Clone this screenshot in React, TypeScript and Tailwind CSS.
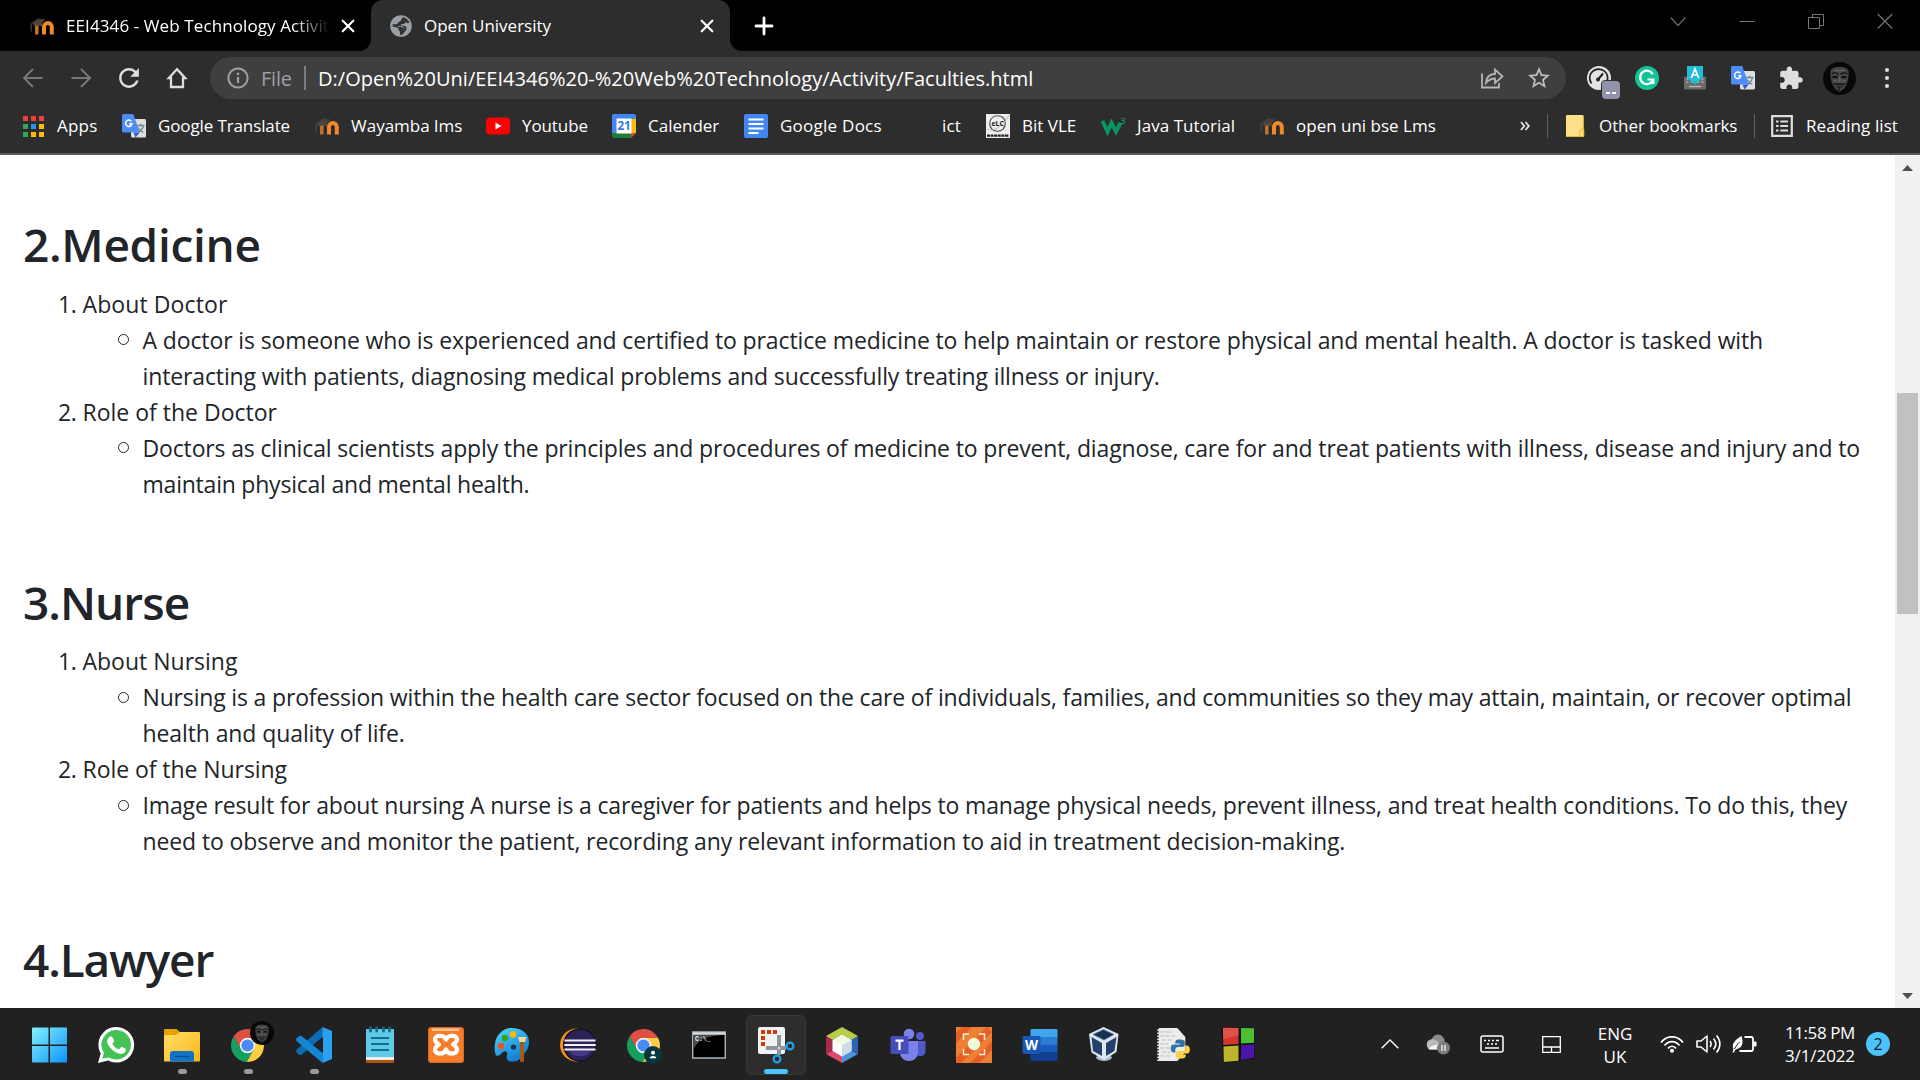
import React from "react";

type SvgProps = { box: string; className: string; children: React.ReactNode };
const Svg = ({ box, className, children }: SvgProps) => (
  <svg viewBox={box} className={`block shrink-0 overflow-visible ${className}`} fill="none">
    {children}
  </svg>
);

/* ---------- shared logos ---------- */

const Moodle = () => (
  <Svg box="0 0 24 24" className="h-6 w-6">
    <path d="M6.800 20.500V11" stroke="#c9742c" strokeWidth="3.400" />
    <path d="M14 20.500V13a3.900 3.900 0 0 1 7.800 0v7.500" stroke="#f1882a" strokeWidth="4" />
    <path d="M0.500 9.500 8 4.500l7.500 1-5 5z" fill="#46403f" />
    <path d="M3.500 9.500c2-1.500 6-1.500 8.500-.5v3.500c-2.500-1.500-6-1.500-8.500 0z" fill="#54443b" />
    <path d="M1.200 9.500v8" stroke="#5a4a42" strokeWidth="1" />
  </Svg>
);

const Translate = () => (
  <Svg box="0 0 24 24" className="h-6 w-6">
    <rect x="9" y="5" width="15" height="18.500" rx="1.500" fill="#dedede" />
    <path d="M15 11.500h7.500M18.700 9.800v1.700M21.500 11.500c-.6 3-3 5.600-5.200 7M16.200 13.500c1 2.200 3 4 5.200 5" stroke="#6b8791" strokeWidth="1.300" />
    <path d="M11.500 18.500h6.200l-4.200 5z" fill="#3a55cf" />
    <path d="M1.500 0h9.800l6.400 18.500H1.500A1.500 1.500 0 0 1 0 17V1.500A1.500 1.500 0 0 1 1.500 0z" fill="#4d8df5" />
    <path d="M9.300 7.200A3.200 3.200 0 1 0 10 9.700H7.200" stroke="#fff" strokeWidth="1.500" />
  </Svg>
);

const MaskFace = ({ className }: { className: string }) => (
  <Svg box="0 0 34 34" className={className}>
    <circle cx="17" cy="17" r="17" fill="#070707" />
    <path d="M8 8c4-4 14-4 18 0 1.500 7-1 15-4 19l-5 4-5-4c-3-4-5.500-12-4-19z" fill="#444" />
    <path d="M9 12.500c2-2 5-1.500 7 .5M25 12.500c-2-2-5-1.500-7 .5" stroke="#151515" strokeWidth="1.300" />
    <path d="M10 16c2-1.300 4-.8 5.200.2M24 16c-2-1.300-4-.8-5.200.2" stroke="#050505" strokeWidth="1.600" />
    <path d="M15.800 14v7h2.400v-7" fill="#5c5c5c" />
    <path d="M11 22c2 2 4 .8 6 .8s4 1.200 6-.8M14 25.300c2 .8 4 .8 6 0M17 27v3" stroke="#101010" strokeWidth="1.200" />
    <path d="M11 19.500h3M20 19.500h3M12 9h10" stroke="#6a6a6a" strokeWidth="1.200" />
  </Svg>
);

const Chrome = ({ className }: { className: string }) => (
  <Svg box="0 0 48 48" className={className}>
    <path d="M3.800 11.050A24 24 0 0 1 45.300 13L24 13 14.470 29.500z" fill="#dd5145" />
    <path d="M3.800 11.050A24 24 0 0 0 22.900 47.950L33.530 29.500H14.470z" fill="#16a05d" />
    <path d="M45.300 13A24 24 0 0 1 22.900 47.950L33.530 29.500 24 13z" fill="#fdcd42" />
    <circle cx="24" cy="24" r="11.300" fill="#f1f1f1" />
    <circle cx="24" cy="24" r="8.900" fill="#4c8bf5" />
  </Svg>
);

/* ---------- tab strip ---------- */

const CloseX = () => (
  <Svg box="0 0 14 14" className="h-[14px] w-[14px]">
    <path d="M1.700 1.700l10.600 10.600M12.300 1.700L1.700 12.300" stroke="#fff" strokeWidth="2.200" strokeLinecap="round" />
  </Svg>
);

const TabStrip = () => (
  <div className="flex h-[51px] w-full shrink-0 bg-black text-[17px] text-white">
    <div className="flex w-[371px] shrink-0 items-center pl-[30px]">
      <Moodle />
      <div className="ml-3 w-[264px] overflow-hidden whitespace-nowrap tracking-[0.1px] [mask-image:linear-gradient(to_right,black_86%,transparent_100%)]">
        EEI4346 - Web Technology Activit
      </div>
      <div className="ml-[11px]">
        <CloseX />
      </div>
    </div>
    <div className="relative flex w-[359px] shrink-0 items-center rounded-t-[12px] bg-[#2d2d2d] pl-[18px]">
      <Svg box="0 0 24 24" className="h-[24px] w-[24px]">
        <circle cx="12" cy="12" r="10.800" fill="#9aa0a6" />
        <path d="M14.500 3.200c2.500.8 5 2.800 6 5.300-1.500 1.300-3 .5-3.500-.7-.8 2-2.300 2.400-4 2.200-1.300 0-1.500 1.500-.3 1.500 3.500 0 4.800.8 4.800 3 0 2.500-2.500 2.800-3.500 5.800l-3 .7c0-2 .3-3.500-1-4.500-1-1 0-2.300-1.300-2.800L3.500 12.500c0-1 .2-2 .5-2.800 2.500 1 4.500.8 5-1 .5-1.500 2.500-.8 3-2.500.3-1.500 1-2.500 2.500-3z" fill="#2d2d2d" opacity=".95" />
        <path d="M9.500 12.500c3-.5 5.500.3 5.500 2" stroke="#9aa0a6" strokeWidth="1" />
      </Svg>
      <div className="ml-[11px] w-[275.500px] whitespace-nowrap">Open University</div>
      <CloseX />
      <Svg box="0 0 12 12" className="absolute -left-[12px] bottom-0 h-3 w-3">
        <path d="M12 0v12H0A12 12 0 0 0 12 0z" fill="#2d2d2d" />
      </Svg>
      <Svg box="0 0 12 12" className="absolute -right-[12px] bottom-0 h-3 w-3">
        <path d="M0 0v12h12A12 12 0 0 1 0 0z" fill="#2d2d2d" />
      </Svg>
    </div>
    <div className="flex flex-1 items-center pl-[24.500px]">
      <Svg box="0 0 18 18" className="h-[18px] w-[18px]">
        <path d="M9 1v16M1 9h16" stroke="#fff" strokeWidth="2.800" strokeLinecap="round" />
      </Svg>
    </div>
    <div className="flex gap-[53px] pt-[13px] pr-[27px]">
      <Svg box="0 0 16 16" className="h-4 w-4">
        <path d="M.7 4.500l7.300 8 7.300-8" stroke="#6b6b6b" strokeWidth="1.200" />
      </Svg>
      <Svg box="0 0 16 16" className="h-4 w-4">
        <path d="M.5 8.500h15" stroke="#777" strokeWidth="1" />
      </Svg>
      <Svg box="0 0 16 16" className="h-4 w-4">
        <path d="M.5 4.500h11v11H.5zM4.500 4V1.500h11v11H12" stroke="#777" strokeWidth="1" />
      </Svg>
      <Svg box="0 0 16 16" className="h-4 w-4">
        <path d="M.7 1l14.600 14.500M15.300 1L.7 15.500" stroke="#777" strokeWidth="1.100" />
      </Svg>
    </div>
  </div>
);

/* ---------- address bar ---------- */

const Toolbar = () => (
  <div className="flex h-[54px] w-full shrink-0 items-center pl-[21px]">
    <div className="flex w-[189px] shrink-0 gap-6">
      <Svg box="0 0 24 24" className="h-6 w-6">
        <path d="M21.500 12H3M12 3l-9 9 9 9" stroke="#777" strokeWidth="2" />
      </Svg>
      <Svg box="0 0 24 24" className="h-6 w-6">
        <path d="M2.500 12H21M12 3l9 9-9 9" stroke="#777" strokeWidth="2" />
      </Svg>
      <Svg box="2.300 2.300 19.400 19.400" className="h-6 w-6">
        <path d="M17.650 6.350C16.200 4.900 14.210 4 12 4c-4.420 0-7.990 3.580-7.990 8s3.570 8 7.990 8c3.730 0 6.840-2.550 7.730-6h-2.080c-.82 2.330-3.040 4-5.650 4-3.310 0-6-2.690-6-6s2.690-6 6-6c1.660 0 3.140.69 4.220 1.780L13 11h7V4l-2.350 2.350z" fill="#dedede" />
      </Svg>
      <Svg box="0 0 24 24" className="h-6 w-6">
        <path d="M12 3.300L3.800 12H6v9h12v-9h2.200z" stroke="#dedede" strokeWidth="2.300" />
      </Svg>
    </div>
    <div className="flex h-[42px] w-[1356px] shrink-0 items-center rounded-full bg-[#3f3f3f] pr-4 pl-[17px] text-[20px] leading-[42px]">
      <Svg box="0 0 22 22" className="h-[22px] w-[22px]">
        <circle cx="11" cy="11" r="9.600" stroke="#9b9fa3" strokeWidth="2" />
        <path d="M11 10v6" stroke="#9b9fa3" strokeWidth="2.200" />
        <circle cx="11" cy="6.900" r="1.300" fill="#9b9fa3" />
      </Svg>
      <div className="ml-3 w-[43px] pt-px tracking-[-0.2px] text-[#9b9fa3]">File</div>
      <div className="h-6 w-[2px] bg-[#7b7d80]" />
      <div className="ml-3 flex-1 pt-px tracking-[0.015px] whitespace-nowrap text-white">
        D:/Open%20Uni/EEI4346%20-%20Web%20Technology/Activity/Faculties.html
      </div>
      <Svg box="0 0 24 24" className="mr-6 h-6 w-6">
        <path d="M2 7.500v14h17V17M6 17c.5-6 4-9 9-9V3.500L22.500 10.500 15 17v-4.500c-4 0-6.500 1.500-9 4.500z" stroke="#b4b4b4" strokeWidth="1.800" />
      </Svg>
      <Svg box="2 2 20 20" className="h-[22px] w-[22px]">
        <path d="M22 9.240l-7.190-.62L12 2 9.190 8.630 2 9.240l5.460 4.730L5.820 21 12 17.270 18.180 21l-1.630-7.030L22 9.240zM12 15.400l-3.760 2.270 1-4.280-3.320-2.880 4.380-.38L12 6.100l1.710 4.040 4.380.38-3.320 2.880 1 4.280L12 15.400z" fill="#bdbdbd" />
      </Svg>
    </div>
    <div className="flex flex-1 items-center pl-[21px]">
      <div className="relative">
        <Svg box="0 0 24 24" className="h-6 w-6">
          <circle cx="12" cy="12" r="12" fill="#e3e3e3" />
          <path d="M4.500 17.500a9 9 0 1 1 15-1" stroke="#222" strokeWidth="1.700" />
          <circle cx="11" cy="13.500" r="2" fill="#222" />
          <path d="M11 13.500l5-6" stroke="#222" strokeWidth="2" />
        </Svg>
        <div className="absolute top-[15px] left-[15px] flex h-[18px] w-[18px] items-center justify-center gap-[2px] rounded-[3px] bg-[#9192ab] pt-[5px] outline outline-[#2d2d2d]">
          <div className="h-[2px] w-[4px] bg-white" />
          <div className="h-[2px] w-[4px] bg-white" />
        </div>
      </div>
      <Svg box="0 0 24 24" className="ml-6 h-6 w-6">
        <circle cx="12" cy="12" r="12" fill="#15c39a" />
        <path d="M17.800 8.300A6.700 6.700 0 1 0 18.200 13.500M12.500 13.500h5.800v4.500" stroke="#fff" strokeWidth="2.200" />
      </Svg>
      <Svg box="0 0 24 24" className="ml-6 h-6 w-6">
        <path d="M2.500 10.500h19a1.500 1.500 0 0 1 1.500 1.500v10a1.500 1.500 0 0 1-1.500 1.500h-19A1.500 1.500 0 0 1 1 22V12a1.500 1.500 0 0 1 1.500-1.500z" fill="#6a6a6a" />
        <path d="M3.500 16h2M8 16h2M14 16h2M18.500 16h2M3.500 13h2M18.500 13h2M6 20.500h12" stroke="#b5b5b5" strokeWidth="1.600" />
        <path d="M4 0h16v12l-8 6.500L4 12z" fill="#22bdd8" />
        <path d="M8.300 12L12 3l3.700 9M9.700 9h4.600" stroke="#fff" strokeWidth="1.700" />
      </Svg>
      <div className="ml-6">
        <Translate />
      </div>
      <Svg box="2 1.500 21 20.500" className="ml-[25px] h-[22px] w-[23px]">
        <path d="M20.500 11H19V7c0-1.100-.9-2-2-2h-4V3.500C13 2.120 11.880 1 10.500 1S8 2.120 8 3.500V5H4c-1.100 0-1.990.9-1.990 2v3.800H3.500c1.490 0 2.700 1.210 2.700 2.700s-1.210 2.700-2.700 2.700H2V20c0 1.100.9 2 2 2h3.800v-1.500c0-1.490 1.210-2.700 2.700-2.700 1.490 0 2.700 1.210 2.700 2.700V22H17c1.100 0 2-.9 2-2v-4h1.500c1.380 0 2.500-1.120 2.500-2.500S21.880 11 20.500 11z" fill="#dedede" />
      </Svg>
      <MaskFace className="ml-5 h-[33px] w-[33px]" />
      <div className="ml-[29px] flex flex-col gap-[4px]">
        <div className="h-1 w-1 rounded-full bg-[#dedede]" />
        <div className="h-1 w-1 rounded-full bg-[#dedede]" />
        <div className="h-1 w-1 rounded-full bg-[#dedede]" />
      </div>
    </div>
  </div>
);

/* ---------- bookmarks ---------- */

const AppsGrid = () => (
  <div className="grid h-6 w-6 shrink-0 grid-cols-[5px_5px_5px] content-center justify-center gap-[3px]">
    {["bg-[#ea4335]", "bg-[#ea4335]", "bg-[#ea4335]", "bg-[#34a853]", "bg-[#2196f3]", "bg-[#fbbc05]", "bg-[#34a853]", "bg-[#fbbc05]", "bg-[#fbbc05]"].map((c, i) => (
      <div key={i} className={`h-[5px] w-[5px] ${c}`} />
    ))}
  </div>
);
const Youtube = () => (
  <Svg box="0 0 24 24" className="h-6 w-6">
    <rect x="0" y="3.500" width="24" height="17" rx="4" fill="#f00" />
    <path d="M9.500 8.500v7l6-3.500z" fill="#fff" />
  </Svg>
);
const Calendar = () => (
  <Svg box="0 0 24 24" className="h-6 w-6">
    <path d="M2 0h20a2 2 0 0 1 2 2v4H0V2a2 2 0 0 1 2-2z" fill="#4285f4" />
    <path d="M0 4h5v16H0z" fill="#4285f4" />
    <path d="M19 5h5v14h-5z" fill="#fbbc04" />
    <path d="M0 19h19v5H2a2 2 0 0 1-2-2z" fill="#188038" />
    <path d="M19 19h5l-5 5z" fill="#ea4335" />
    <path d="M4.500 4.500h15v15h-15z" fill="#fff" />
    <text x="12" y="16.300" textAnchor="middle" fontSize="12" fontWeight="700" fill="#2f7de8">21</text>
  </Svg>
);
const Docs = () => (
  <Svg box="0 0 24 24" className="h-6 w-6">
    <rect width="24" height="24" rx="2" fill="#4285f4" />
    <path d="M4.500 5.500h15M4.500 10h15M4.500 14.500h15M4.500 19h10" stroke="#fff" strokeWidth="2.200" />
  </Svg>
);
const Vle = () => (
  <Svg box="0 0 24 24" className="h-6 w-6">
    <path d="M0 0h24v24H0z" fill="#eee" />
    <circle cx="11.500" cy="9.500" r="7.800" stroke="#444" strokeWidth="1.100" />
    <path d="M1 15c6 3 16-2 22-14M5 5c5-5 13-4 15 1" stroke="#aaa" strokeWidth=".8" />
    <text x="11.700" y="12.300" textAnchor="middle" fontSize="7" fontWeight="700" fill="#222">eLC</text>
    <path d="M1 21.700h22" stroke="#222" strokeWidth="2.200" strokeDasharray="3 .6" />
  </Svg>
);
const W3 = () => (
  <Svg box="0 0 24 24" className="h-6 w-6">
    <path d="M1.500 7l5 10.500L10.500 9l4.500 8.500L19.500 9" stroke="#059862" strokeWidth="4" />
    <text x="19.500" y="10" fontSize="9" fontWeight="600" fill="#059862">3</text>
  </Svg>
);
const Blank = () => <div className="h-6 w-6 shrink-0" />;

const bookmarks = [
  { icon: <AppsGrid />, label: "Apps", cls: "w-[101px] tracking-[0.2px]" },
  { icon: <Translate />, label: "Google Translate", cls: "w-[193px] tracking-[-0.12px]" },
  { icon: <Moodle />, label: "Wayamba lms", cls: "w-[171px]" },
  { icon: <Youtube />, label: "Youtube", cls: "w-[126px] tracking-[-0.1px]" },
  { icon: <Calendar />, label: "Calender", cls: "w-[132px]" },
  { icon: <Docs />, label: "Google Docs", cls: "w-[162px] tracking-[0.25px]" },
  { icon: <Blank />, label: "ict", cls: "w-[80px] tracking-[0.1px]" },
  { icon: <Vle />, label: "Bit VLE", cls: "w-[115px]" },
  { icon: <W3 />, label: "Java Tutorial", cls: "w-[159px] tracking-[0.06px]" },
  { icon: <Moodle />, label: "open uni bse Lms", cls: "w-[260px]" },
];

const Bookmarks = () => (
  <div className="flex h-[48px] w-full shrink-0 items-center pb-[6px] pl-[21px] text-[17px] text-white">
    {bookmarks.map((b) => (
      <div key={b.label} className={`flex shrink-0 items-center gap-3 whitespace-nowrap ${b.cls}`}>
        {b.icon}
        {b.label}
      </div>
    ))}
    <Svg box="0 0 10 10" className="h-[10px] w-[10px]">
      <path d="M1 1l3.300 4L1 9M5.500 1l3.300 4-3.300 4" stroke="#dedede" strokeWidth="1.900" />
    </Svg>
    <div className="ml-[17px] h-6 w-px bg-[#5f5f5f]" />
    <Svg box="0 0 18 22" className="ml-[18px] h-[22px] w-[18px]">
      <path d="M1 0h15.500a1 1 0 0 1 1 1v13H18v8H1a1 1 0 0 1-1-1V1a1 1 0 0 1 1-1z" fill="#ffe08a" />
      <path d="M17.300 14c-3 0-3.500 1-3.500 3v4.500M17.300 1v13M.5 21.500h17.300V14" stroke="#e8b931" strokeWidth="1" />
    </Svg>
    <div className="ml-[15px] w-[155px] tracking-[-0.08px] whitespace-nowrap">Other bookmarks</div>
    <div className="h-6 w-px shrink-0 bg-[#5f5f5f]" />
    <Svg box="0 0 22 22" className="ml-[16px] h-[22px] w-[22px]">
      <path d="M1.200 1.200h19.600v19.600H1.200z" stroke="#dedede" strokeWidth="2.200" />
      <path d="M5 6.500h2.500M5 11h2.500M5 15.500h2.500M9.300 6.500H17M9.300 11H17M9.300 15.500H17" stroke="#dedede" strokeWidth="2" />
    </Svg>
    <div className="ml-[13px] tracking-[0.08px] whitespace-nowrap">Reading list</div>
  </div>
);

/* ---------- page content ---------- */

type Line = { text: string; cls: string };
type Item = { title: string; cls: string; lines: Line[] };
type Section = { heading: string; cls: string; items: Item[] };

const sections: Section[] = [
  {
    heading: "2.Medicine",
    cls: "tracking-[-0.3px]",
    items: [
      {
        title: "About Doctor",
        cls: "tracking-[0.1px]",
        lines: [
          { text: "A doctor is someone who is experienced and certified to practice medicine to help maintain or restore physical and mental health. A doctor is tasked with", cls: "tracking-[-0.12px]" },
          { text: "interacting with patients, diagnosing medical problems and successfully treating illness or injury.", cls: "tracking-[-0.13px]" },
        ],
      },
      {
        title: "Role of the Doctor",
        cls: "tracking-[0px]",
        lines: [
          { text: "Doctors as clinical scientists apply the principles and procedures of medicine to prevent, diagnose, care for and treat patients with illness, disease and injury and to", cls: "tracking-[-0.15px]" },
          { text: "maintain physical and mental health.", cls: "tracking-[-0.22px]" },
        ],
      },
    ],
  },
  {
    heading: "3.Nurse",
    cls: "tracking-[-0.95px]",
    items: [
      {
        title: "About Nursing",
        cls: "tracking-[0px]",
        lines: [
          { text: "Nursing is a profession within the health care sector focused on the care of individuals, families, and communities so they may attain, maintain, or recover optimal", cls: "tracking-[-0.162px]" },
          { text: "health and quality of life.", cls: "tracking-[-0.1px]" },
        ],
      },
      {
        title: "Role of the Nursing",
        cls: "tracking-[-0.06px]",
        lines: [
          { text: "Image result for about nursing A nurse is a caregiver for patients and helps to manage physical needs, prevent illness, and treat health conditions. To do this, they", cls: "tracking-[-0.15px]" },
          { text: "need to observe and monitor the patient, recording any relevant information to aid in treatment decision-making.", cls: "tracking-[-0.11px]" },
        ],
      },
    ],
  },
  { heading: "4.Lawyer", cls: "tracking-[-1.1px]", items: [] },
];

const Content = () => (
  <div className="flex min-h-0 w-full flex-1 overflow-hidden bg-white text-[#212529]">
    <div className="flex-1 overflow-hidden pt-[61px] pl-[23px]">
      {sections.map((s) => (
        <section key={s.heading} className="mb-[72px]">
          <h2 className={`mb-3 text-[46px] leading-[57.6px] font-semibold ${s.cls}`}>{s.heading}</h2>
          <div className="pl-[35px] text-[23px] leading-[36px] whitespace-nowrap">
            {s.items.map((it, i) => (
              <div key={it.title}>
                <div className="flex">
                  <span className="w-[24.500px] tracking-[-0.5px]">{i + 1}.</span>
                  <span className={it.cls}>{it.title}</span>
                </div>
                <div className="flex pl-[60px]">
                  <div className="mt-[12.500px] mr-[13.500px] h-[11px] w-[11px] shrink-0 rounded-full border border-[#212529]" />
                  <div>
                    {it.lines.map((l) => (
                      <div key={l.text} className={l.cls}>{l.text}</div>
                    ))}
                  </div>
                </div>
              </div>
            ))}
          </div>
        </section>
      ))}
    </div>
    <div className="flex w-[25px] shrink-0 flex-col items-center bg-[#f1f1f1]">
      <Svg box="0 0 11 6" className="mt-[10px] h-[6px] w-[11px]">
        <path d="M5.500 0L11 6H0z" fill="#505050" />
      </Svg>
      <div className="mt-[222px] h-[221px] w-[21px] bg-[#c1c1c1]" />
      <div className="flex-1" />
      <Svg box="0 0 11 6" className="mb-[9px] h-[6px] w-[11px]">
        <path d="M5.500 6L11 0H0z" fill="#505050" />
      </Svg>
    </div>
  </div>
);

/* ---------- taskbar ---------- */

const Windows = () => (
  <Svg box="0.500 0 36 36" className="h-9 w-9">
    <defs>
      <linearGradient id="win" x1="0" y1="0" x2="36" y2="36" gradientUnits="userSpaceOnUse">
        <stop stopColor="#86f3ff" />
        <stop offset="1" stopColor="#0a93fb" />
      </linearGradient>
    </defs>
    <path d="M1.500.5H17v17H.5v-16a1 1 0 0 1 1-1zM18.500.5h16a1 1 0 0 1 1 1v16h-17zM.5 19H17v16.500H1.500a1 1 0 0 1-1-1zM18.500 19h17v15.500a1 1 0 0 1-1 1h-16z" fill="url(#win)" />
  </Svg>
);
const Whatsapp = () => (
  <Svg box="0 0 36 36" className="h-9 w-9">
    <path d="M18.200 0a17.800 17.800 0 1 1-8.200 33.500L0 36l2.700-9.500A17.800 17.800 0 0 1 18.200 0z" fill="#fff" />
    <path d="M18.200 3a14.800 14.800 0 1 1-7.500 27.600l-6.300 1.200 1.500-6A14.800 14.800 0 0 1 18.200 3z" fill="#43c354" />
    <path d="M12.500 9.500c.9-.2 1.700 0 2 .8l1.500 3.500c.2.600 0 1.200-1.700 3 1.500 2.900 3.700 4.700 6.500 5.800l1.900-2.200c.4-.5.9-.6 1.400-.3l3.400 1.700c.8.5.3 3.800-2.500 4.800-3 1.200-8.500-1.200-11.500-4.600-2.800-3.200-5.300-6.400-4-9.600.6-1.700 1.900-2.700 3-2.900z" fill="#fff" />
  </Svg>
);
const Explorer = () => (
  <Svg box="0 0 36 36" className="h-9 w-9">
    <defs>
      <linearGradient id="fold" x1="0" y1="0" x2="36" y2="36" gradientUnits="userSpaceOnUse">
        <stop stopColor="#ffdf70" />
        <stop offset="1" stopColor="#fbb817" />
      </linearGradient>
    </defs>
    <path d="M1 2h11.500l4 3.500L14 9H0V3a1 1 0 0 1 1-1z" fill="#e6a100" />
    <path d="M0 8h12l4-3h19a1 1 0 0 1 1 1v27.500a1 1 0 0 1-1 1H1a1 1 0 0 1-1-1z" fill="url(#fold)" />
    <path d="M6 34.500V27a3 3 0 0 1 3-3h18a3 3 0 0 1 3 3v7.500z" fill="#1172c6" />
    <path d="M11 29.500h14" stroke="#0a4f93" strokeWidth="1.300" />
  </Svg>
);
const VsCode = () => (
  <Svg box="0 0 36 36" className="h-9 w-9">
    <path d="M26.500 0L.8 22.500c-1 1-1 2.300 0 3.200l2.500 2c.7.500 1.500.5 2.200 0L27 10z" fill="#0b6cb4" />
    <path d="M27 26L5.500 9c-.7-.5-1.500-.5-2.200 0L.8 11c-1 .9-1 2.300 0 3.200L26.500 36z" fill="#1585d1" />
    <path d="M26.500 0L36 4v28l-9.500 4V0z" fill="#27a1f0" />
    <path d="M27 10v16l-10-8z" fill="#212121" />
  </Svg>
);
const Notepad = () => (
  <Svg box="0 0 36 36" className="h-9 w-9">
    <path d="M4 31h28v4a1 1 0 0 1-1 1H5a1 1 0 0 1-1-1z" fill="#b4530b" />
    <path d="M4 29h28v4H4z" fill="#eee" />
    <path d="M4 3a1 1 0 0 1 1-1h26a1 1 0 0 1 1 1v27H4z" fill="#61cae3" />
    <path d="M9 11h18M9 17h18M9 23h18" stroke="#0c6f93" strokeWidth="1.800" />
    <path d="M8.500 1v3M14.700 1v3M21.500 1v3M27.500 1v3" stroke="#116b8b" strokeWidth="2.800" strokeLinecap="round" />
  </Svg>
);
const Xampp = () => (
  <Svg box="0 0 36 36" className="h-9 w-9">
    <rect width="36" height="36" rx="3" fill="#d9691f" />
    <rect x="1" y="1" width="34" height="34" rx="2.500" fill="#f97c2a" />
    <path d="M3.500 1.500h28l-1 2.500h-26z" fill="#fbc49a" />
    <path d="M18 12.500C16 7.500 7 7.500 7 12.500c0 2.500 1.500 3.500 4 5-2.500 1.500-4 2.500-4 5 0 5.500 9 5.500 11 0 2 5.500 11 5.500 11 0 0-2.500-1.500-3.500-4-5 2.500-1.500 4-2.500 4-5 0-5-9-5-11 0z" stroke="#fff" strokeWidth="4.200" strokeLinejoin="round" />
  </Svg>
);
const Paint = () => (
  <Svg box="0 0 36 36" className="h-9 w-9">
    <defs>
      <linearGradient id="pal" x1="4" y1="0" x2="24" y2="36" gradientUnits="userSpaceOnUse">
        <stop stopColor="#4fd8f7" />
        <stop offset="1" stopColor="#0e74d0" />
      </linearGradient>
    </defs>
    <path d="M18 1c9 0 17 5 17 14 0 7-4 11-7 14-3 5-7 6-11 5.500-4-.5-5-3-4-6 1-4-1.500-5-4-3.500-2 2-4 4.500-7 3.500C1 26 0 21 1 17 2 8 9 1 18 1z" fill="url(#pal)" />
    <circle cx="19.500" cy="20" r="2.600" fill="#15364e" />
    <circle cx="7" cy="19" r="3.200" fill="#e4572b" />
    <circle cx="11" cy="11" r="3.200" fill="#36a31e" />
    <circle cx="19" cy="7.500" r="3.200" fill="#ffb900" />
    <path d="M26 15h4v18.500c0 2-4 2-4 0z" fill="#a85b10" />
    <path d="M24 10h8.500l-1.500 5h-5.500z" fill="#f5d4a6" />
  </Svg>
);
const Eclipse = () => (
  <Svg box="0 0 36 36" className="h-9 w-9">
    <path d="M18 1.500C8 1 0 8.500 0 18s8 17 18 16.500z" fill="#f7941e" />
    <circle cx="19.500" cy="18" r="16.500" fill="#0d0a1c" />
    <circle cx="20" cy="18" r="15.500" fill="#2c2255" />
    <path d="M10 24h20c-2 7-18 7-20 0z" fill="#473788" />
    <path d="M4.500 13.500h31M4.300 18h31.400M4.500 22.500h31" stroke="#f1eff7" strokeWidth="2.200" />
  </Svg>
);
const Cmd = () => (
  <Svg box="1 0 36 36" className="h-9 w-9">
    <path d="M1.700 5h32.600v26H1.700z" fill="#000" stroke="#a9b5bd" strokeWidth="1.400" />
    <path d="M2 5.200h32v2.600H2z" fill="#d5dce1" />
    <path d="M3 8h28c-14 1-24 4-28 14z" fill="#4a4a4a" />
    <text x="4" y="14" fontSize="6.500" fontWeight="700" fill="#eee" fontFamily="Liberation Mono">C:\_</text>
  </Svg>
);
const Snip = () => (
  <Svg box="0 0 36 36" className="h-9 w-9">
    <rect x="0" y="0" width="27" height="27" rx="2" fill="#f0f3f6" />
    <path d="M3 5h4M9 5h4M15 5h4M5 9v4M5 15v4" stroke="#d83b01" strokeWidth="4" />
    <path d="M8 21h20M21 8v20" stroke="#8d959c" strokeWidth="4" />
    <circle cx="21" cy="21" r="1.200" fill="#dde2e6" />
    <circle cx="32" cy="19" r="3.400" stroke="#1ba1ea" strokeWidth="2.200" />
    <circle cx="19" cy="32" r="3.400" stroke="#1ba1ea" strokeWidth="2.200" />
  </Svg>
);
const Netbeans = () => (
  <Svg box="0 0 36 36" className="h-9 w-9">
    <path d="M18 0l16 9-6 4-10-5.500L8 13 2 9z" fill="#b5cf47" />
    <path d="M2 9l7 4v11.500L2 27z" fill="#a52c4b" />
    <path d="M2 27l7-3 9 5v7z" fill="#e0486b" />
    <path d="M34 27l-7-3-9 5v7z" fill="#4a93df" />
    <path d="M34 9l-7 4v11.500l7 2.500z" fill="#2c65b5" />
    <path d="M18 7.500l9.500 5.500v11L18 29.500 8.500 24V13z" fill="#fff" />
    <path d="M18 18l9.500-5v11L18 29.500z" fill="#cfdbe6" />
    <path d="M18 7.500l9.500 5.500-9.500 5-9.500-5z" fill="#f3f6e3" />
  </Svg>
);
const Teams = () => (
  <Svg box="0 0 36 36" className="h-9 w-9">
    <circle cx="30" cy="9" r="4" fill="#5059c9" />
    <path d="M27 14h8.500v10c0 6-7 6-8.500 4z" fill="#5059c9" />
    <circle cx="19" cy="7" r="5.300" fill="#7b83eb" />
    <path d="M10 14h18v11c0 12-18 12-18 0z" fill="#7b83eb" />
    <rect x=".5" y="9" width="18" height="18" rx="1.500" fill="#464ebc" />
    <path d="M5.500 13.700h8M9.500 13.700v9.300" stroke="#fff" strokeWidth="2.200" />
  </Svg>
);
const Recorder = () => (
  <Svg box="0 0 36 36" className="h-9 w-9">
    <path d="M0 0h36v36H0z" fill="#ef7f32" />
    <path d="M0 16L16 0H6L0 6zM0 31L31 0 36 5 5 36H0zM14 36l22-22v9L23 36z" fill="#e75d25" />
    <path d="M7.500 13V7H13M23 7h5.500v6M28.500 22v5.500H23M13 27.500H7.500V22" stroke="#f7f5da" strokeWidth="1.500" />
    <circle cx="18" cy="17" r="6.200" fill="#f1f7d8" />
  </Svg>
);
const Word = () => (
  <Svg box="0 0 36 36" className="h-9 w-9">
    <path d="M9.500 2h25a1 1 0 0 1 1 1v7.500h-27V3a1 1 0 0 1 1-1z" fill="#41a5ee" />
    <path d="M8.500 10h27v8h-27z" fill="#2b7cd3" />
    <path d="M8.500 18h27v7.500h-27z" fill="#185abd" />
    <path d="M8.500 25h27v8a1 1 0 0 1-1 1h-25a1 1 0 0 1-1-1z" fill="#103f91" />
    <rect x=".5" y="9" width="18" height="18" rx="1.500" fill="#1a56b4" />
    <text x="9.500" y="23" textAnchor="middle" fontSize="13.500" fontWeight="700" fill="#fff">W</text>
  </Svg>
);
const VBox = () => (
  <Svg box="2 0 36 36" className="h-9 w-9">
    <path d="M12 27h12l2 4c-3 4-13 4-16 0z" fill="#a9bbd6" />
    <path d="M17.500 0L32.500 7l-2 18L18 33 5.500 25.500 3 7z" fill="#dfe7f1" />
    <path d="M17.500 2.500L28 7.500 18 13 7 7.500z" fill="#183153" />
    <path d="M5.500 10l10.500 6v13L7 24zM30.500 10L20 16v13l8.500-5z" fill="#22406b" />
    <path d="M17.500 2.500L28 7.500 18 13 7 7.500z" stroke="#5a7aa6" strokeWidth=".8" />
  </Svg>
);
const PythonFile = () => (
  <Svg box="0.700 0 36 36" className="h-9 w-9">
    <path d="M4 1h20l8 9v15l-8 9H4z" fill="#ececec" />
    <path d="M7 5h12M7 9h15M9 13h10M7 17h8M7 21h10M9 25h8M7 29h10" stroke="#bdbdbd" strokeWidth="1" strokeDasharray="4 1.500" />
    <path d="M4.500 1v33" stroke="#333" strokeWidth="2" strokeDasharray="1.500 1.500" />
    <path d="M26 12.500c-4 0-4 1.500-4 4h4.500v1H20c-3.500 0-3.500 7.500 0 8h2v-2.500c0-2 1-3 3-3h4c1.500 0 2.500-1 2.500-2.500V15c0-2-2-2.500-5.500-2.500z" fill="#3673a5" />
    <path d="M28 31.500c4 0 4.500-1.500 4.500-4H28v-1h6c3.500 0 3.500-7.500 0-8h-2v2.500c0 2-1 3-3 3h-4c-1.500 0-2.500 1-2.500 2.500v2.500c0 2 2 2.500 5.500 2.500z" fill="#ffd040" />
  </Svg>
);
const Blocks = () => (
  <Svg box="-0.500 0 36 36" className="h-9 w-9">
    <path d="M1 0l33 1v31L3 36z" fill="#111" />
    <path d="M2.500.8L18 1v16L2.800 18z" fill="#d3362b" />
    <path d="M20.500 1L33.500 1.200v14.600l-13 .8z" fill="#4bc12f" />
    <path d="M3 19.500l15-1v15.200L3.300 35z" fill="#bdb62c" />
    <path d="M20.500 18.300l13-1v13.500l-13 2.200z" fill="#4c14a8" />
    <path d="M2.500.8L18 1v7L2.600 12z" fill="#e8685c" opacity=".6" />
  </Svg>
);

const Cell = ({ children, dot, active }: { children: React.ReactNode; dot?: boolean; active?: boolean }) => (
  <div className="relative flex h-[72px] w-[66px] shrink-0 items-center justify-center pt-[2px]">
    {active && <div className="absolute top-[7px] left-[3px] h-[60px] w-[60px] rounded-[6px] border border-[#383838] bg-[#2d2d2d]" />}
    <div className="relative">{children}</div>
    {dot && <div className="absolute top-[61px] left-[28.500px] h-[5px] w-[9px] rounded-full bg-[#9a9a9a]" />}
    {active && <div className="absolute top-[61px] left-[21px] h-[5px] w-6 rounded-full bg-[#4cc2ff]" />}
  </div>
);

const Taskbar = () => (
  <div className="flex h-[72px] w-full shrink-0 bg-[#212121] pl-[17px] text-white">
    <Cell><Windows /></Cell>
    <Cell><Whatsapp /></Cell>
    <Cell dot><Explorer /></Cell>
    <Cell dot>
      <Chrome className="mr-px h-[33px] w-[33px]" />
      <MaskFace className="absolute -top-[8px] left-[19px] h-6 w-6" />
    </Cell>
    <Cell dot><VsCode /></Cell>
    <Cell><Notepad /></Cell>
    <Cell><Xampp /></Cell>
    <Cell><Paint /></Cell>
    <Cell><Eclipse /></Cell>
    <Cell>
      <Chrome className="mr-px h-[33px] w-[33px]" />
      <Svg box="0 0 18 18" className="absolute top-[17px] left-[17px] h-[18px] w-[18px]">
        <circle cx="9" cy="9" r="9" fill="#06373e" />
        <circle cx="9" cy="6.700" r="2" fill="#fff" />
        <path d="M5.700 12.300c0-3 6.600-3 6.600 0z" fill="#fff" />
      </Svg>
    </Cell>
    <Cell><Cmd /></Cell>
    <Cell active><Snip /></Cell>
    <Cell><Netbeans /></Cell>
    <Cell><Teams /></Cell>
    <Cell><Recorder /></Cell>
    <Cell><Word /></Cell>
    <Cell><VBox /></Cell>
    <Cell><PythonFile /></Cell>
    <Cell><Blocks /></Cell>
    <div className="flex flex-1 items-center justify-end pr-[30px] text-[17px] leading-[23px]">
      <Svg box="0 0 18 10" className="h-[10px] w-[18px]">
        <path d="M.7 9.300L9 1l8.300 8.300" stroke="#fff" strokeWidth="1.400" />
      </Svg>
      <Svg box="0 0 26 20" className="ml-[26px] h-5 w-[26px]">
        <circle cx="13" cy="7" r="6.500" fill="#8c8c8c" />
        <path d="M5.500 15.500a5.200 5.200 0 0 1 0-10c3-1 6 0 8 3l5 7z" fill="#b9b9b9" />
        <path d="M3 15c3-4 8-5 14-4v4.500H5z" fill="#f2f2f2" />
        <circle cx="18.500" cy="14" r="6.500" fill="#7d7d7d" />
        <path d="M17 11v6M20 11v6" stroke="#fff" strokeWidth="1.200" />
      </Svg>
      <Svg box="0 0 24 18" className="ml-[29px] h-[18px] w-6">
        <rect x="1" y="1" width="22" height="16" rx="2" stroke="#fff" strokeWidth="1.500" />
        <path d="M4 5.500h2M8 5.500h2M12 5.500h2M16 5.500h3M7 9h2M11 9h2M15 9h2M5 13h14" stroke="#fff" strokeWidth="1.700" />
      </Svg>
      <Svg box="0 0 19 17" className="ml-[38px] h-[17px] w-[19px]">
        <path d="M.7.700h17.600v15.600H.7zM.7 11h17.600M9.500 11v5.300" stroke="#fff" strokeWidth="1.300" />
      </Svg>
      <div className="ml-[35px] w-[38px] pt-px text-center">
        <div>ENG</div>
        <div>UK</div>
      </div>
      <Svg box="0 0 24 18" className="ml-[26px] h-[18px] w-6">
        <path d="M1 7.500C7 0 17 0 23 7.500M4.500 10.500c4-5.300 11-5.300 15 0M8 13.500c2-3 6-3 8 0" stroke="#fff" strokeWidth="1.700" />
        <circle cx="12" cy="15.700" r="2" fill="#fff" />
      </Svg>
      <Svg box="0 0 25 20" className="ml-[12px] h-5 w-[25px]">
        <path d="M1 7h4l6-5v16l-6-5H1zM14 7c1.500 2 1.500 4 0 6M17.500 4.500c3 3.500 3 7.500 0 11M20.500 1.500c4.500 5 4.500 12 0 17" stroke="#fff" strokeWidth="1.600" strokeLinejoin="round" />
      </Svg>
      <Svg box="0 0 25 18" className="ml-[11px] h-[18px] w-[25px]">
        <path d="M12.500 2H19a2 2 0 0 1 2 2v10a2 2 0 0 1-2 2H7.500" stroke="#fff" strokeWidth="1.800" />
        <path d="M21.500 6.500h2a1 1 0 0 1 1 1v3a1 1 0 0 1-1 1h-2z" fill="#fff" />
        <path d="M9.500 1c2 6 1.500 11.500-4.500 13-1.500.3-2.500 1.500-3 3.500H.5L1.500 14C-1 9 3.500 4.500 9.500 1z" fill="#fff" />
        <path d="M2.500 14c1.500-3 3-5 5-7" stroke="#212121" strokeWidth="1" />
      </Svg>
      <div className="ml-[25px] w-[73px] text-right">
        <div className="tracking-[-0.4px]">11:58 PM</div>
        <div className="tracking-[-0.1px]">3/1/2022</div>
      </div>
      <div className="ml-[11px] flex h-6 w-6 items-center justify-center rounded-full bg-[#4cc2ff] text-[16px] text-[#10202a]">2</div>
    </div>
  </div>
);

export default function App() {
  return (
    <div className="flex h-[1080px] w-[1920px] flex-col overflow-hidden bg-white font-['Open_Sans',sans-serif]">
      <TabStrip />
      <div className="w-full shrink-0 border-b-2 border-[#5a5a5a] bg-[#2d2d2d]">
        <Toolbar />
        <Bookmarks />
      </div>
      <Content />
      <Taskbar />
    </div>
  );
}
